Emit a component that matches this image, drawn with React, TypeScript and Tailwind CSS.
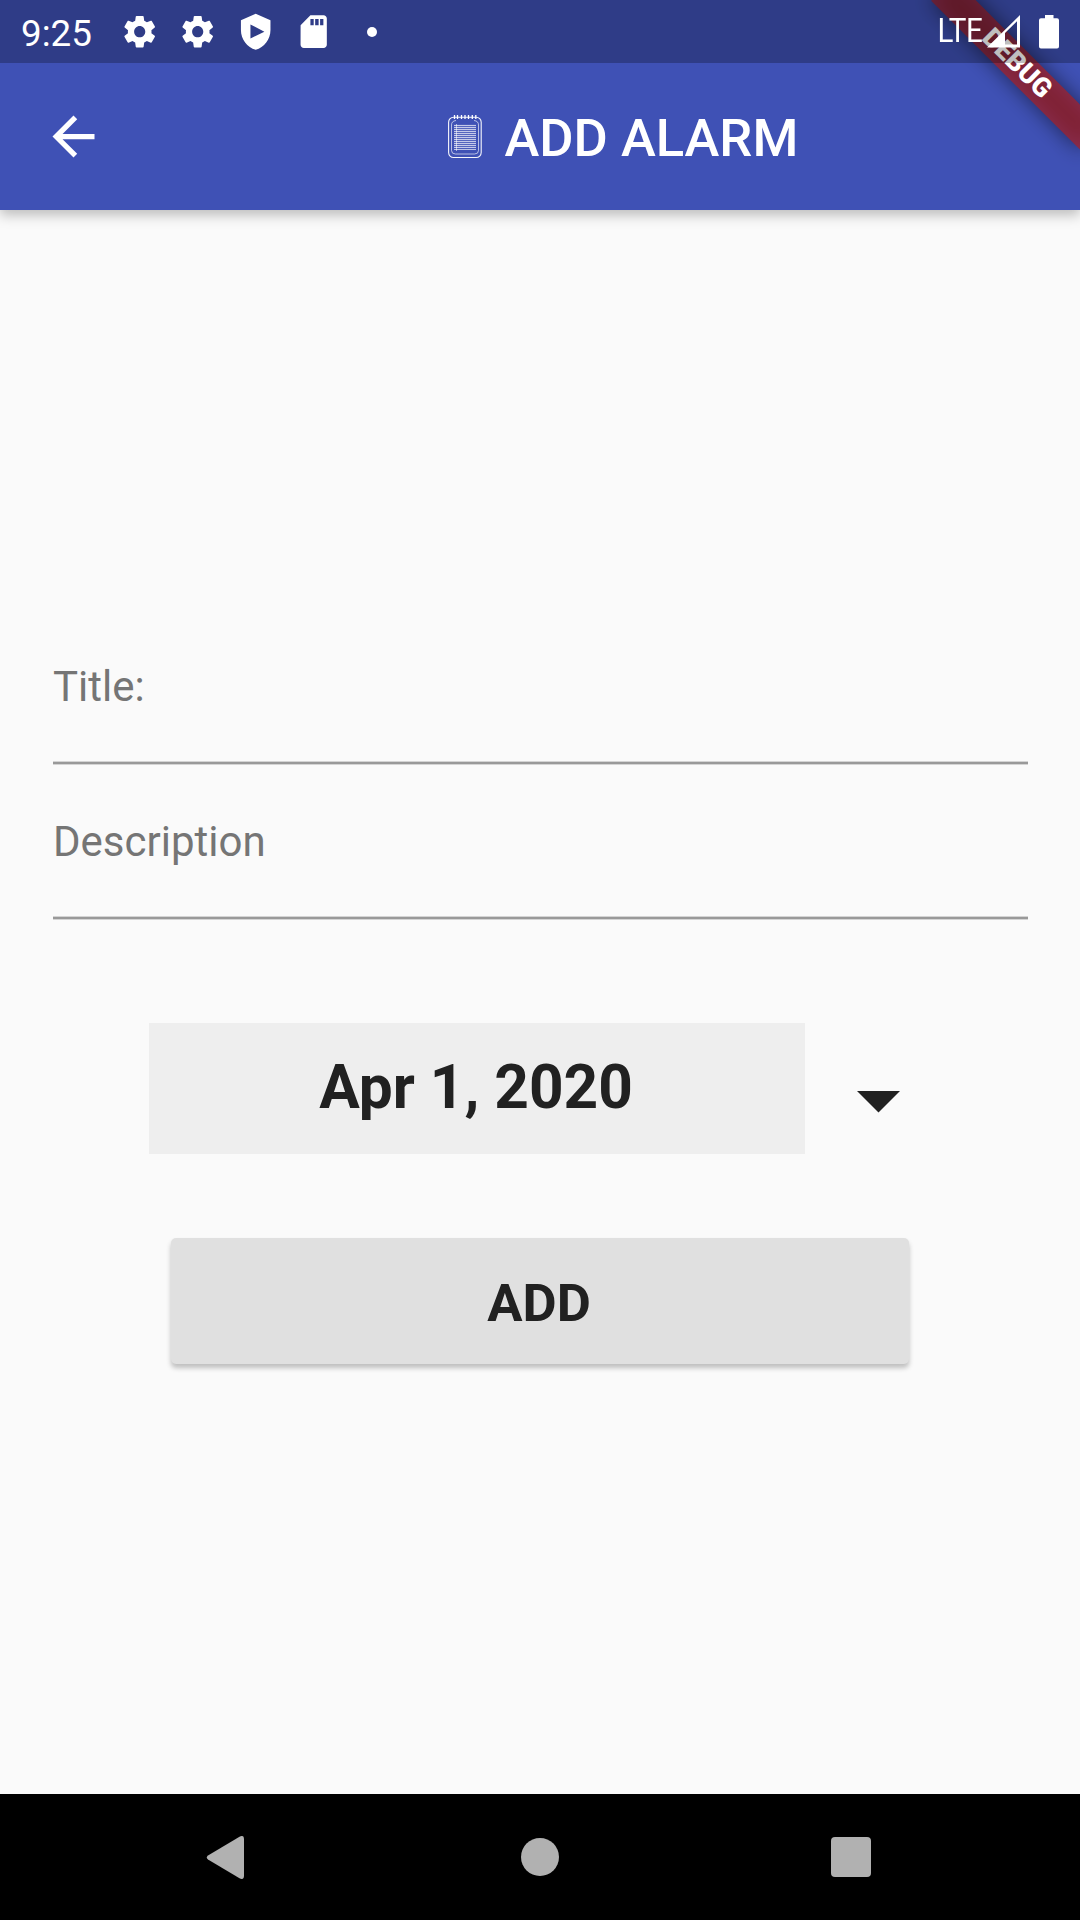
import React from "react";

const GEAR =
  "M19.14 12.94c.04-.3.06-.61.06-.94 0-.32-.02-.64-.07-.94l2.03-1.58c.18-.14.23-.41.12-.61l-1.92-3.32c-.12-.22-.37-.29-.59-.22l-2.39.96c-.5-.38-1.03-.7-1.62-.94l-.36-2.54c-.04-.24-.24-.41-.48-.41h-3.84c-.24 0-.43.17-.47.41l-.36 2.54c-.59.24-1.13.57-1.62.94l-2.39-.96c-.22-.08-.47 0-.59.22L2.74 8.87c-.12.21-.08.47.12.61l2.03 1.58c-.05.3-.09.63-.09.94s.02.64.07.94l-2.03 1.58c-.18.14-.23.41-.12.61l1.92 3.32c.12.22.37.29.59.22l2.39-.96c.5.38 1.03.7 1.62.94l.36 2.54c.05.24.24.41.48.41h3.84c.24 0 .44-.17.47-.41l.36-2.54c.59-.24 1.13-.56 1.62-.94l2.39.96c.22.08.47 0 .59-.22l1.92-3.32c.12-.22.07-.47-.12-.61l-2.01-1.58zM12 15.4c-1.88 0-3.4-1.52-3.4-3.4s1.52-3.4 3.4-3.4 3.4 1.52 3.4 3.4-1.52 3.4-3.4 3.4z";

const STATUS_ICONS = [
  GEAR,
  GEAR,
  "M12 1 3 5v6c0 5.55 3.84 10.74 9 12 5.16-1.26 9-6.45 9-12V5L12 1zM8.8 7.6 17.3 12l-8.5 4.1V7.6z",
  "M18 2h-8L4.02 8 4 20c0 1.1.9 2 2 2h12c1.1 0 2-.9 2-2V4c0-1.1-.9-2-2-2zM12 8h-2V4.2h2V8zm3 0h-2.1V4.2H15V8zm2.9 0h-2V4.2h2V8z",
];

function StatusBar() {
  return (
    <div className="relative z-20 flex h-[63px] items-center bg-black/25 text-white">
      <span className="w-[120.2px] pl-[21px] pt-[5px] text-[36.75px] leading-[42px]">9:25</span>
      <div className="flex items-center gap-[18.6px]">
        {STATUS_ICONS.map((d, i) => (
          <svg key={i} viewBox="0 0 24 24" className="size-[39.4px] fill-white">
            <path fillRule="evenodd" d={d} />
          </svg>
        ))}
      </div>
      <span className="ml-[33.5px] size-[10px] rounded-full bg-white" />
      <span className="ml-auto mr-[5px] origin-right scale-x-[0.91] pb-[2px] text-[32.5px] leading-[38px] tracking-[-0.6px]">
        LTE
      </span>
      <svg viewBox="0 0 34 33" className="h-[33px] w-[34px]">
        <path fill="#fff" fillRule="evenodd" d="M0 32.5 33 0v32.5H0zM18 18v11.5h12V6.3L18 18z" />
      </svg>
      <svg viewBox="0 0 20 34" className="ml-[18px] mr-[21px] h-[34px] w-[20px]">
        <path fill="#fff" d="M6 0h8.5v3.3H18q2 0 2 2v26.2q0 2-2 2H2q-2 0-2-2V5.300q0-2 2-2h4z" />
      </svg>
    </div>
  );
}

function DebugBanner() {
  return (
    <div className="pointer-events-none absolute right-0 top-0 z-10 h-[210px] w-[300px] overflow-hidden">
      <div className="absolute left-[195px] top-[73.5px] h-[31.5px] w-[210px] origin-[105px_-73.5px] rotate-45">
        <div className="absolute inset-0 bg-black/50 blur-[10.4px]" />
        <div className="relative flex h-full items-center justify-center bg-[#B71C1C]/63 text-[26.8px] leading-none font-black text-white">
          DEBUG
        </div>
      </div>
    </div>
  );
}

function NotepadIcon() {
  return (
    <svg viewBox="0 0 34 44" className="h-[44px] w-[34px]" fill="none" stroke="#fff">
      <rect x="0.6" y="2.2" width="32.6" height="40.3" rx="5" strokeWidth="1.1" strokeOpacity="0.95" />
      <path
        d="M8 5.500Q3.500 6 3.500 10v25.500q0 3.500 4 3.500h19q4 0 4-3.500V10q0-4-4.500-4.500"
        strokeWidth="0.9"
        strokeOpacity="0.7"
      />
      <path d="M6.500 0v4M9.500 0v4M13.500 0v4M17 0v4M20.500 0v4M24.300 0v4M27.800 0v4" strokeWidth="1.3" />
      <path
        d="M6 10.500h22M6 12.500h22M6 14.500h22M6 16.500h22M6 18.500h22M6 20.500h22M6 22.500h22M6 24.500h22M6 26.500h22M6 28.500h22M6 30.500h22M6 32.500h22M6 34.500h22"
        strokeWidth="1"
        strokeOpacity="0.65"
      />
      <path d="M6 9.500h22v24H6z" fill="#fff" fillOpacity="0.12" stroke="none" />
      <path d="M8.500 9v27" strokeWidth="1" strokeOpacity="0.55" />
    </svg>
  );
}

function Field({ label }: { label: string }) {
  return (
    <div className="flex h-[155px] w-[975px] flex-col justify-between">
      <label className="pl-[0.5px] pt-[52px] text-[42px] leading-[49px] text-[#757575]">{label}</label>
      <div className="h-[4px] border-y border-[#d4d4d4] bg-[#999999]" />
    </div>
  );
}

export default function App() {
  return (
    <div className="relative flex h-[1920px] w-[1080px] flex-col overflow-hidden bg-[#FAFAFA] font-['Roboto',sans-serif]">
      <header className="relative h-[210px] bg-[#3F51B5] shadow-[0_5px_12px_rgba(0,0,0,0.25)]">
        <DebugBanner />
        <StatusBar />
        <div className="flex h-[147px] items-center">
          <svg viewBox="0 0 24 24" className="ml-[42px] size-[63px] fill-white">
            <path d="M20 11H7.830l5.590-5.590L12 4l-8 8 8 8 1.410-1.410L7.830 13H20v-2z" />
          </svg>
          <div className="ml-[343px] flex items-center gap-[22.5px]">
            <NotepadIcon />
            <h1 className="pt-[3px] text-[52.5px] leading-[62px] font-medium text-white">ADD ALARM</h1>
          </div>
        </div>
      </header>
      <main className="flex flex-1 flex-col pl-[52.5px] pt-[400px]">
        <Field label="Title:" />
        <Field label="Description" />
        <div className="mt-[103px] flex">
          <div className="ml-[96.5px] flex h-[131px] w-[656px] items-center justify-center bg-[#EEEEEE] pb-[2px] pr-[2px] text-[60.375px] leading-[70px] font-bold text-[#212121]">
            Apr 1, 2020
          </div>
          <svg viewBox="0 0 43 22" className="ml-[52px] mt-[67.500px] h-[22px] w-[43px] fill-[#212121]">
            <path d="M0 0h43L21.500 21.500z" />
          </svg>
        </div>
        <button className="ml-[118.5px] mt-[84px] h-[126px] w-[738px] rounded-[5px] bg-[#E0E0E0] pr-[2px] pt-[3px] text-[52.5px] leading-[62px] font-bold text-[#212121] shadow-[0_4px_5px_rgba(0,0,0,0.24)]">
          ADD
        </button>
      </main>
      <nav className="flex h-[126px] items-center bg-black">
        <svg viewBox="0 0 38 43" className="ml-[206px] h-[43px] w-[38px] fill-[#B1B1B1]">
          <path d="M33.500.7Q38-1.500 38 3v37q0 4.500-4.500 2.300L2 23.500Q-.5 21.500 2 19.500z" />
        </svg>
        <span className="ml-[277px] size-[38px] rounded-full bg-[#B1B1B1]" />
        <span className="ml-[272px] size-[40px] rounded-[4px] bg-[#B1B1B1]" />
      </nav>
    </div>
  );
}
